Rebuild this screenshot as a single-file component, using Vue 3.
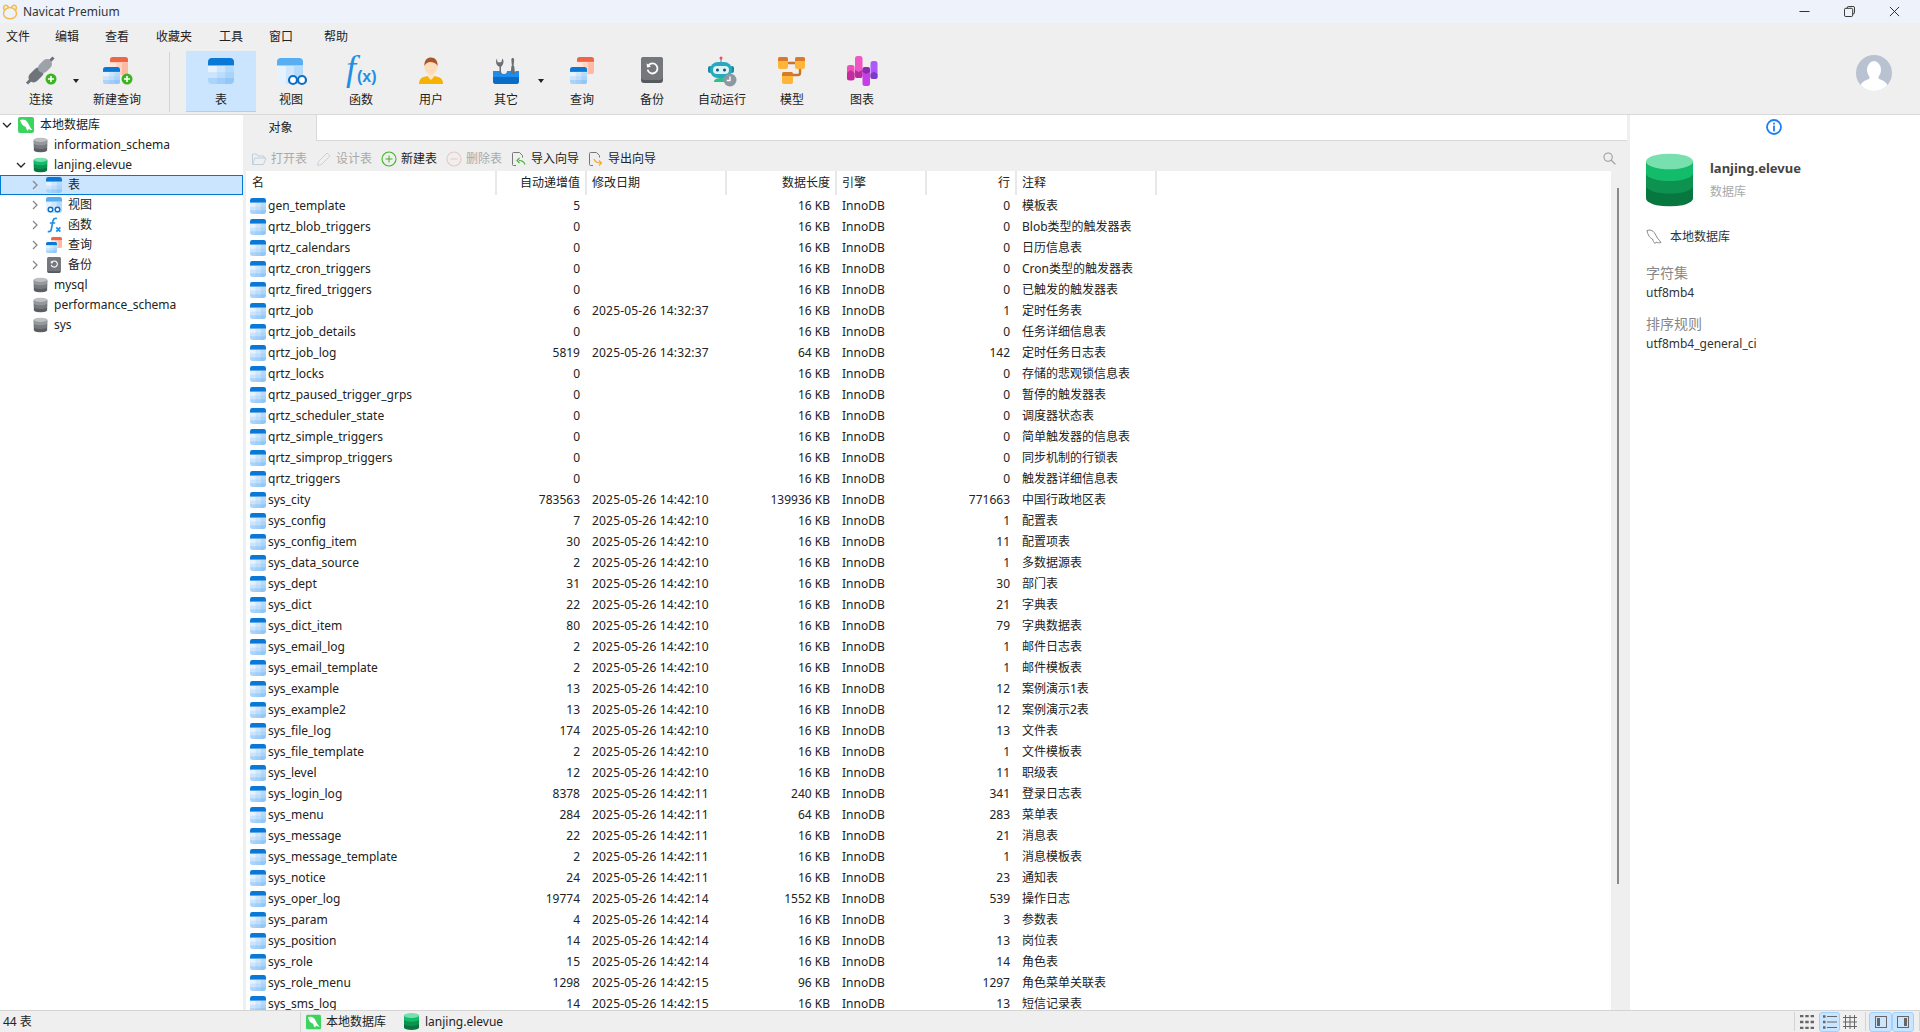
<template>
  <div class="app">
    <svg class="defs" aria-hidden="true">
      <defs>
        <clipPath id="clip-tbl"><rect width="16" height="16" rx="2.4" /></clipPath>
        <symbol id="tbl" viewBox="0 0 16 16">
          <g clip-path="url(#clip-tbl)">
            <rect width="16" height="16" fill="#e6f2fe" />
            <rect x="5.5" y="5" width="5" height="11" fill="#cfe6fc" />
            <rect x="10.5" y="5" width="5.5" height="11" fill="#b5dafb" />
            <rect y="8.7" width="16" height="3.6" fill="#8cc6f7" opacity=".28" />
            <rect y="12.3" width="16" height="4" fill="#6db6f5" opacity=".5" />
            <rect width="16" height="4.6" fill="#0a78d7" />
          </g>
        </symbol>
        <symbol id="tbl-red" viewBox="0 0 16 16">
          <g clip-path="url(#clip-tbl)">
            <rect width="16" height="16" fill="#ffe6dc" />
            <rect x="5.5" y="5" width="5" height="11" fill="#ffd3c2" />
            <rect x="10.5" y="5" width="5.5" height="11" fill="#ffb9a2" />
            <rect width="16" height="4.6" fill="#ef6545" />
          </g>
        </symbol>
        <symbol id="tbl-view" viewBox="0 0 16 16">
          <g clip-path="url(#clip-tbl)">
            <rect width="16" height="16" fill="#e6f2fe" />
            <rect x="5.5" y="5" width="5" height="11" fill="#cfe6fc" />
            <rect x="10.5" y="5" width="5.5" height="11" fill="#b5dafb" />
            <rect width="16" height="4.6" fill="#58aef3" />
          </g>
        </symbol>
        <symbol id="db-green" viewBox="0 0 48 54">
          <path d="M0 8V46a24 8 0 0 0 48 0V8z" fill="#08763f" />
          <path d="M0 8V33a24 8 0 0 0 48 0V8z" fill="#0e9250" />
          <path d="M0 8V20a24 8 0 0 0 48 0V8z" fill="#12bc6a" />
          <ellipse cx="24" cy="8" rx="24" ry="8" fill="#78e0ae" />
        </symbol>
        <symbol id="db-gray" viewBox="0 0 48 54">
          <path d="M0 8V46a24 8 0 0 0 48 0V8z" fill="#5b5f63" />
          <path d="M0 8V33a24 8 0 0 0 48 0V8z" fill="#777b80" />
          <path d="M0 8V20a24 8 0 0 0 48 0V8z" fill="#94989c" />
          <ellipse cx="24" cy="8" rx="24" ry="8" fill="#bdbfc2" />
        </symbol>
        <symbol id="mysql" viewBox="0 0 16 16">
          <rect width="16" height="16" rx="2" fill="#3dd35f" />
          <path d="M2 3c2.600-1.200 5.400-.6 7 1.600 1.300 1.800 2.300 4.300 3.600 6.200.5.800 1.100 1.500 1.800 2.200-1.500.1-2.800-.4-3.800-1.200l-.6 2.200C8.700 13 8 11.500 7.600 9.800 5.200 9.400 3 6.800 2 3z" fill="#fff" />
        </symbol>
        <symbol id="fx-small" viewBox="0 0 16 16">
          <path d="M11 1.500C8.500.7 7.300 2 6.900 4.200L5.300 12.500C5 14.300 3.800 15 1.800 14.400M3.800 6h5.400" fill="none" stroke="#1f8fe6" stroke-width="1.700" />
          <path d="M10.300 10.300l4 4.300m0-4.300l-4 4.300" fill="none" stroke="#1f8fe6" stroke-width="1.700" />
        </symbol>
        <symbol id="backup" viewBox="0 0 22 26">
          <rect width="22" height="26" rx="3" fill="#55585c" />
          <rect width="22" height="23" rx="3" fill="#74777b" />
          <path d="M7.500 8.400a5 5 0 1 1-.9 4.200" fill="none" stroke="#fff" stroke-width="1.800" />
          <path d="M5.600 6.200l.4 4.200 4-.7z" fill="#fff" />
        </symbol>
      </defs>
    </svg>

    <header class="titlebar">
      <svg class="logo" viewBox="0 0 16 16">
        <path d="M8 3.500c3.500 0 6.500 3 6.500 6.200 0 2.900-3 5-6.500 5s-6.500-2.100-6.500-5C1.500 6.500 4.500 3.500 8 3.500z" fill="none" stroke="#f2bd4e" stroke-width="1.500" />
        <path d="M3 6.500C1 5 1 2.500 3 1.500c1.500-.6 3 .4 3.500 2.200M13 6.500c2-1.500 2-4 0-5-1.500-.6-3 .4-3.500 2.200" fill="none" stroke="#f2bd4e" stroke-width="1.500" />
      </svg>
      <span class="app-name">Navicat Premium</span>
      <div class="win-btns">
        <svg viewBox="0 0 12 12"><path d="M.500 6h11" stroke="#222" fill="none" /></svg>
        <svg viewBox="0 0 12 12"><path d="M3.500 2.500V2a1.500 1.500 0 0 1 1.500-1.500h5A1.500 1.500 0 0 1 11.500 2v5A1.500 1.500 0 0 1 10 8.500h-.5M2 2.500h6A1.500 1.500 0 0 1 9.500 4v6A1.500 1.500 0 0 1 8 11.500H2A1.500 1.500 0 0 1 .500 10V4A1.500 1.500 0 0 1 2 2.500z" stroke="#222" fill="none" /></svg>
        <svg viewBox="0 0 12 12"><path d="M1 1l10 10M11 1L1 11" stroke="#222" fill="none" /></svg>
      </div>
    </header>

    <nav class="menubar">
      <span v-for="m in menus" :key="m">{{ m }}</span>
    </nav>

    <div class="toolbar">
      <button class="tool">
        <svg viewBox="0 0 32 32">
          <path d="M2 28.500L8 22.500M23 8l5.500-5.500" stroke="#6d7278" stroke-width="3" fill="none" />
          <path d="M8.500 22.500L13.500 17.500" stroke="#6f747a" stroke-width="10" stroke-linecap="round" fill="none" />
          <path d="M18 13L22 9" stroke="#9da2a8" stroke-width="10" stroke-linecap="round" fill="none" />
          <circle cx="26" cy="24" r="5.500" fill="#3cb521" />
          <path d="M23 24h6M26 21v6" stroke="#fff" stroke-width="1.600" />
        </svg>
        <span>连接</span>
      </button>
      <i class="caret"></i>
      <button class="tool">
        <svg viewBox="0 0 32 32">
          <use href="#tbl-red" x="9" y="2" width="18" height="18" />
          <use href="#tbl" x="2" y="12" width="17" height="17" />
          <circle cx="26" cy="24" r="5.500" fill="#3cb521" />
          <path d="M23 24h6M26 21v6" stroke="#fff" stroke-width="1.600" />
        </svg>
        <span>新建查询</span>
      </button>
      <i class="tool-sep"></i>
      <button class="tool active">
        <svg viewBox="0 0 32 32"><use href="#tbl" x="3" y="3" width="26" height="26" /></svg>
        <span>表</span>
      </button>
      <button class="tool">
        <svg viewBox="0 0 32 32">
          <use href="#tbl-view" x="2" y="3" width="26" height="26" />
          <circle cx="18" cy="25" r="4" fill="#fff" stroke="#0a6fc8" stroke-width="2.200" />
          <circle cx="27" cy="25" r="4" fill="#fff" stroke="#0a6fc8" stroke-width="2.200" />
        </svg>
        <span>视图</span>
      </button>
      <button class="tool">
        <svg viewBox="0 0 32 32">
          <text x="1" y="25" class="fx-f">f</text>
          <text x="12" y="27" class="fx-x">(x)</text>
        </svg>
        <span>函数</span>
      </button>
      <button class="tool">
        <svg viewBox="0 0 32 32">
          <path d="M4 29c0-6 4-8 12-8s12 2 12 8z" fill="#f6b200" />
          <path d="M13 18h6v4l-3 3-3-3z" fill="#fde3c8" />
          <ellipse cx="16" cy="11.500" rx="6.500" ry="8" fill="#fddcb9" />
          <path d="M9.500 11c-.6-6 3-8.500 6.500-8.500 4 0 7 3 6.500 8.500-1.500-3-4-4-7.500-4-2 0-4 1-5.500 4z" fill="#a8572a" />
        </svg>
        <span>用户</span>
      </button>
      <button class="tool tool-other">
        <svg viewBox="0 0 32 32">
          <path d="M3 16h8a3 3 0 0 0 6 0h5a3 3 0 0 0 4 0h3v10a3 3 0 0 1-3 3H6a3 3 0 0 1-3-3z" fill="#1c8cee" />
          <path d="M3 22h26v4a3 3 0 0 1-3 3H6a3 3 0 0 1-3-3z" fill="#0a6cc6" />
          <path d="M9.500 19V11.800C7.200 11 6 9 6 6.800c0-1.300.4-2.500 1-3.300l.5 3.800h3.800l1-3.800c.8.800 1.200 2 1.200 3.300 0 2.200-1.300 4.200-2.500 5V19a1 1 0 0 1-1.500 0z" fill="#6b7075" />
          <path d="M22 3h1.500l.7 1.500L23.600 11h-1.700l-.6-6.500zM21.400 11h2.800l.8 8h-4.400z" fill="#6b7075" />
        </svg>
        <span>其它</span>
      </button>
      <i class="caret"></i>
      <button class="tool">
        <svg viewBox="0 0 32 32">
          <use href="#tbl-red" x="11" y="2" width="17" height="17" />
          <use href="#tbl" x="4" y="12" width="17" height="17" />
        </svg>
        <span>查询</span>
      </button>
      <button class="tool">
        <svg viewBox="0 0 32 32"><use href="#backup" x="5" y="2" width="22" height="26" /></svg>
        <span>备份</span>
      </button>
      <button class="tool">
        <svg viewBox="0 0 32 32">
          <path d="M15 4V8" stroke="#7e8a94" stroke-width="1.200" />
          <circle cx="15" cy="3" r="1.500" fill="#ef4d5c" />
          <path d="M8 27c0-3 3-4 7-4s7 1 7 4z" fill="#2cc08e" />
          <rect x="2" y="11" width="4" height="7" rx="2" fill="#1a8aa0" />
          <rect x="24" y="11" width="4" height="7" rx="2" fill="#1a8aa0" />
          <rect x="4" y="7" width="22" height="16" rx="8" fill="#27a9bf" />
          <rect x="7" y="11" width="16" height="8" rx="4" fill="#dff4f8" />
          <circle cx="11.500" cy="15" r="1.500" fill="#164f78" />
          <circle cx="18.500" cy="15" r="1.500" fill="#164f78" />
          <circle cx="24" cy="25" r="6.500" fill="#8e98a2" />
          <path d="M24 21.500V25.500h-3.200" stroke="#fff" stroke-width="1.300" fill="none" />
        </svg>
        <span>自动运行</span>
      </button>
      <button class="tool">
        <svg viewBox="0 0 32 32">
          <path d="M12 8h7M24 14v4a2 2 0 0 1-2 2h-5" stroke="#c9742a" stroke-width="2.400" fill="none" />
          <rect x="2" y="2" width="10" height="12" rx="2" fill="#ffb43a" />
          <path d="M2 6V4a2 2 0 0 1 2-2h6a2 2 0 0 1 2 2v2z" fill="#d97a28" />
          <rect x="19" y="2" width="10" height="12" rx="2" fill="#ffb43a" />
          <path d="M19 6V4a2 2 0 0 1 2-2h6a2 2 0 0 1 2 2v2z" fill="#d97a28" />
          <rect x="6" y="17" width="11" height="12" rx="2" fill="#ffb43a" />
          <path d="M6 21v-2a2 2 0 0 1 2-2h7a2 2 0 0 1 2 2v2z" fill="#d97a28" />
        </svg>
        <span>模型</span>
      </button>
      <button class="tool">
        <svg viewBox="0 0 32 32">
          <rect x="1" y="10" width="7.500" height="15" rx="2.500" fill="#f04ebb" />
          <path d="M1 18l3.700-3 3.800 3v5a2.500 2.500 0 0 1-2.500 2.500H3.500A2.500 2.500 0 0 1 1 23z" fill="#c42b9c" />
          <rect x="9" y="1" width="7.500" height="22" rx="2.500" fill="#f055c6" />
          <path d="M9 15l3.700 2 3.800-2v5.500a2.500 2.500 0 0 1-2.500 2.500h-2.500A2.500 2.500 0 0 1 9 20.500z" fill="#b72ba0" />
          <rect x="16.500" y="12" width="7.500" height="19" rx="2.500" fill="#c63ee6" />
          <path d="M16.500 17l3.700 2 3.800-2v-2.500a2.500 2.500 0 0 0-2.500-2.500H19a2.500 2.500 0 0 0-2.500 2.500z" fill="#8f2ab0" />
          <rect x="24.500" y="6" width="7" height="18" rx="2.500" fill="#ac58fb" />
          <path d="M24.500 19l3.500-2.500 3.500 2.500v2.500a2.500 2.500 0 0 1-2.500 2.500h-2a2.500 2.500 0 0 1-2.500-2.500z" fill="#7c3bc6" />
        </svg>
        <span>图表</span>
      </button>
      <svg class="avatar" viewBox="0 0 36 36">
        <clipPath id="clip-av"><circle cx="18" cy="18" r="18" /></clipPath>
        <g clip-path="url(#clip-av)">
          <rect width="36" height="36" fill="#b9c2d0" />
          <ellipse cx="18" cy="15" rx="7" ry="9" fill="#fff" />
          <path d="M14 21h8l1 3c4 1.500 8 3 9 8v4H4v-4c1-5 5-6.500 9-8z" fill="#fff" />
        </g>
      </svg>
    </div>

    <div class="main">
      <aside class="tree">
        <div v-for="n in tree" :key="n.label" class="node" :class="['lv' + n.level, { selected: n.selected }]">
          <span class="chev">
            <svg v-if="n.open !== undefined" viewBox="0 0 10 10">
              <path v-if="n.open" d="M1 3l4 4 4-4" fill="none" stroke="#222" stroke-width="1.300" />
              <path v-else d="M3 1l4 4-4 4" fill="none" stroke="#888" stroke-width="1.300" />
            </svg>
          </span>
          <svg class="node-icon" :class="n.icon" viewBox="0 0 16 16">
            <template v-if="n.icon === 'query'">
              <use href="#tbl-red" x="5" y="0" width="11" height="11" />
              <use href="#tbl" x="0" y="5" width="11" height="11" />
            </template>
            <template v-else-if="n.icon === 'view'">
              <use href="#tbl-view" x="0" y="0" width="16" height="16" />
              <circle cx="4.500" cy="12.500" r="2.300" fill="#fff" stroke="#0a6fc8" stroke-width="1.400" />
              <circle cx="11.500" cy="12.500" r="2.300" fill="#fff" stroke="#0a6fc8" stroke-width="1.400" />
            </template>
            <use v-else :href="'#' + n.icon" x="0" y="0" width="16" height="16" />
          </svg>
          <span>{{ n.label }}</span>
        </div>
      </aside>

      <section class="center">
        <div class="tabs">
          <div class="tab">对象</div>
          <div class="tab-rest"></div>
        </div>
        <div class="obj-bar">
          <span v-for="a in actions" :key="a.label" class="act" :class="{ off: a.off }">
            <svg viewBox="0 0 16 16" v-html="a.svg"></svg>
            {{ a.label }}
          </span>
          <svg class="search" viewBox="0 0 14 14">
            <circle cx="5.500" cy="5.500" r="4.500" fill="none" stroke="#999" stroke-width="1.100" />
            <path d="M8.800 8.800l4.500 4.500" stroke="#999" stroke-width="1.300" />
          </svg>
        </div>
        <div class="list-wrap">
          <div class="list">
            <div class="row head">
              <span v-for="c in columns" :key="c.label" :class="{ num: c.num }">{{ c.label }}</span>
            </div>
            <div v-for="r in rows" :key="r[0]" class="row">
              <span class="name"><svg viewBox="0 0 16 16"><use href="#tbl" width="16" height="16" /></svg>{{ r[0] }}</span>
              <span class="num">{{ r[1] }}</span>
              <span class="date">{{ r[2] }}</span>
              <span class="num">{{ r[3] }} KB</span>
              <span>InnoDB</span>
              <span class="num">{{ r[4] }}</span>
              <span>{{ r[5] }}</span>
            </div>
          </div>
          <div class="gutter"><i class="thumb"></i></div>
        </div>
      </section>

      <aside class="panel">
        <svg class="info" viewBox="0 0 16 16">
          <circle cx="8" cy="8" r="7" fill="none" stroke="#1e80f0" stroke-width="1.800" />
          <rect x="7.100" y="3.600" width="1.800" height="1.900" fill="#1e80f0" />
          <rect x="7.100" y="6.600" width="1.800" height="5.800" fill="#1e80f0" />
        </svg>
        <div class="db-head">
          <svg viewBox="0 0 48 54"><use href="#db-green" width="48" height="54" /></svg>
          <div class="db-text">
            <div class="db-name">lanjing.elevue</div>
            <div class="db-type">数据库</div>
          </div>
        </div>
        <div class="conn">
          <svg viewBox="0 0 16 16">
            <path d="M1 1.500c3-1 5.600-.2 7.200 2 1.200 1.700 2.300 4.200 3.600 6 .8 1 1.800 2.200 3.200 4-1.800.6-3.400.3-4.800-.5l-1 1.500C7.800 13.400 7 12 6.600 10 4 9.300 1.800 6 1 1.500z" fill="none" stroke="#888" />
          </svg>
          本地数据库
        </div>
        <div class="prop-label">字符集</div>
        <div class="prop-val">utf8mb4</div>
        <div class="prop-label second">排序规则</div>
        <div class="prop-val">utf8mb4_general_ci</div>
      </aside>
    </div>

    <footer class="status">
      <span class="count">44 表</span>
      <span class="crumb first"><svg viewBox="0 0 16 16"><use href="#mysql" width="16" height="16" /></svg>本地数据库</span>
      <span class="crumb second"><svg viewBox="0 0 48 54"><use href="#db-green" width="48" height="54" /></svg>lanjing.elevue</span>
      <div class="modes">
        <i class="mode-sep"></i>
        <span class="mode m-grid">
          <svg viewBox="0 0 14 14"><path d="M0 1h3.400M5.300 1h3.400M10.600 1H14M0 7h3.400M5.300 7h3.400M10.600 7H14M0 13h3.400M5.300 13h3.400M10.600 13H14" stroke="#666" stroke-width="2.400" fill="none" /></svg>
        </span>
        <span class="mode m-list on">
          <svg viewBox="0 0 14 14"><path d="M0 1.500h2.500M0 7h2.500M0 12.500h2.500" stroke="#666" stroke-width="2.400" /><path d="M4 1.500h10M4 7h10M4 12.500h10" stroke="#666" stroke-width="1.200" /></svg>
        </span>
        <span class="mode m-table">
          <svg viewBox="0 0 14 14"><path d="M0 2.500h14M0 7h14M0 11.500h14M2.500 0v14M7 0v14M11.500 0v14" stroke="#666" fill="none" /></svg>
        </span>
        <i class="mode-sep"></i>
        <span class="mode m-left on">
          <svg viewBox="0 0 12 12"><rect x=".5" y=".5" width="11" height="11" fill="none" stroke="#666" /><rect x="2" y="2" width="3" height="8" fill="#666" /></svg>
        </span>
        <span class="mode m-right on">
          <svg viewBox="0 0 12 12"><rect x=".5" y=".5" width="11" height="11" fill="none" stroke="#666" /><rect x="7" y="2" width="3" height="8" fill="#666" /></svg>
        </span>
        <i class="mode-sep"></i>
      </div>
    </footer>
  </div>
</template>

<script setup>
const menus = ['文件', '编辑', '查看', '收藏夹', '工具', '窗口', '帮助']

const tree = [
  { label: '本地数据库', level: 0, open: true, icon: 'mysql' },
  { label: 'information_schema', level: 1, icon: 'db-gray' },
  { label: 'lanjing.elevue', level: 1, open: true, icon: 'db-green' },
  { label: '表', level: 2, open: false, icon: 'tbl', selected: true },
  { label: '视图', level: 2, open: false, icon: 'view' },
  { label: '函数', level: 2, open: false, icon: 'fx-small' },
  { label: '查询', level: 2, open: false, icon: 'query' },
  { label: '备份', level: 2, open: false, icon: 'backup' },
  { label: 'mysql', level: 1, icon: 'db-gray' },
  { label: 'performance_schema', level: 1, icon: 'db-gray' },
  { label: 'sys', level: 1, icon: 'db-gray' },
]

const actions = [
  { label: '打开表', off: true, svg: '<path d="M1.500 13.500V3h4l1.500 2h6v2M1.500 13.500L4 7h11l-2.500 6.500z" fill="none" stroke="#bfd0dc"/>' },
  { label: '设计表', off: true, svg: '<path d="M1.500 14.500l1-4L11 2l3 3-8.500 8.500z" fill="none" stroke="#c5d3de"/>' },
  { label: '新建表', svg: '<circle cx="8" cy="8" r="7" fill="none" stroke="#3cb521" stroke-width="1.100"/><path d="M4.500 8h7M8 4.500v7" stroke="#3cb521"/>' },
  { label: '删除表', off: true, svg: '<circle cx="8" cy="8" r="7" fill="none" stroke="#e8c8c0" stroke-width="1.100"/><path d="M4.500 8h7" stroke="#e8c8c0"/>' },
  { label: '导入向导', svg: '<path d="M5 14.500H2.500a1 1 0 0 1-1-1v-11a1 1 0 0 1 1-1h6l3 3v2" fill="none" stroke="#777"/><path d="M14 13.500c-1-3-3-4-6-4M8.500 7L6 9.500l2.500 2.500" fill="none" stroke="#3cb521" stroke-width="1.100"/>' },
  { label: '导出向导', svg: '<path d="M5 14.500H2.500a1 1 0 0 1-1-1v-11a1 1 0 0 1 1-1h6l3 3v2" fill="none" stroke="#777"/><path d="M6 8c1 3 3 4 7 4M11 9.500l2.500 2.500L11 14.500" fill="none" stroke="#f5a623" stroke-width="1.100"/>' },
]

const columns = [
  { label: '名' },
  { label: '自动递增值', num: true },
  { label: '修改日期' },
  { label: '数据长度', num: true },
  { label: '引擎' },
  { label: '行', num: true },
  { label: '注释' },
]

const d = '2025-05-26 14:42:'
const rows = [
  ['gen_template', 5, '', 16, 0, '模板表'],
  ['qrtz_blob_triggers', 0, '', 16, 0, 'Blob类型的触发器表'],
  ['qrtz_calendars', 0, '', 16, 0, '日历信息表'],
  ['qrtz_cron_triggers', 0, '', 16, 0, 'Cron类型的触发器表'],
  ['qrtz_fired_triggers', 0, '', 16, 0, '已触发的触发器表'],
  ['qrtz_job', 6, '2025-05-26 14:32:37', 16, 1, '定时任务表'],
  ['qrtz_job_details', 0, '', 16, 0, '任务详细信息表'],
  ['qrtz_job_log', 5819, '2025-05-26 14:32:37', 64, 142, '定时任务日志表'],
  ['qrtz_locks', 0, '', 16, 0, '存储的悲观锁信息表'],
  ['qrtz_paused_trigger_grps', 0, '', 16, 0, '暂停的触发器表'],
  ['qrtz_scheduler_state', 0, '', 16, 0, '调度器状态表'],
  ['qrtz_simple_triggers', 0, '', 16, 0, '简单触发器的信息表'],
  ['qrtz_simprop_triggers', 0, '', 16, 0, '同步机制的行锁表'],
  ['qrtz_triggers', 0, '', 16, 0, '触发器详细信息表'],
  ['sys_city', 783563, d + '10', 139936, 771663, '中国行政地区表'],
  ['sys_config', 7, d + '10', 16, 1, '配置表'],
  ['sys_config_item', 30, d + '10', 16, 11, '配置项表'],
  ['sys_data_source', 2, d + '10', 16, 1, '多数据源表'],
  ['sys_dept', 31, d + '10', 16, 30, '部门表'],
  ['sys_dict', 22, d + '10', 16, 21, '字典表'],
  ['sys_dict_item', 80, d + '10', 16, 79, '字典数据表'],
  ['sys_email_log', 2, d + '10', 16, 1, '邮件日志表'],
  ['sys_email_template', 2, d + '10', 16, 1, '邮件模板表'],
  ['sys_example', 13, d + '10', 16, 12, '案例演示1表'],
  ['sys_example2', 13, d + '10', 16, 12, '案例演示2表'],
  ['sys_file_log', 174, d + '10', 16, 13, '文件表'],
  ['sys_file_template', 2, d + '10', 16, 1, '文件模板表'],
  ['sys_level', 12, d + '10', 16, 11, '职级表'],
  ['sys_login_log', 8378, d + '11', 240, 341, '登录日志表'],
  ['sys_menu', 284, d + '11', 64, 283, '菜单表'],
  ['sys_message', 22, d + '11', 16, 21, '消息表'],
  ['sys_message_template', 2, d + '11', 16, 1, '消息模板表'],
  ['sys_notice', 24, d + '11', 16, 23, '通知表'],
  ['sys_oper_log', 19774, d + '14', 1552, 539, '操作日志'],
  ['sys_param', 4, d + '14', 16, 3, '参数表'],
  ['sys_position', 14, d + '14', 16, 13, '岗位表'],
  ['sys_role', 15, d + '14', 16, 14, '角色表'],
  ['sys_role_menu', 1298, d + '15', 96, 1297, '角色菜单关联表'],
  ['sys_sms_log', 14, d + '15', 16, 13, '短信记录表'],
]
</script>

<style>
html, body { margin: 0; overflow: hidden; }
</style>

<style scoped>
.app { width: 1920px; height: 1032px; display: flex; flex-direction: column; overflow: hidden; background: #fff; color: #222; font: 12px/16px "Noto Sans", "Noto Sans CJK SC", sans-serif; }
.defs { position: absolute; width: 0; height: 0; }
.titlebar { flex: none; height: 23px; display: flex; align-items: center; padding-left: 2px; background: #eef3fb; }
.logo { width: 16px; height: 16px; }
.app-name { margin-left: 5px; color: #333; }
.win-btns { margin-left: auto; display: flex; gap: 34px; padding-right: 20px; }
.win-btns svg { width: 11px; height: 11px; }
.menubar { flex: none; height: 27px; display: flex; align-items: center; padding-left: 6px; background: #efefef; }
.menubar span { margin-right: 26px; }
.menubar span:nth-child(1) { margin-right: 25px; }
.menubar span:nth-child(3), .menubar span:nth-child(4) { margin-right: 27px; }
.menubar span:nth-child(6) { margin-right: 31px; }
.toolbar { flex: none; height: 65px; display: flex; padding: 1px 0 0 6px; border-bottom: 1px solid #d9d9d9; background: #efefef; box-sizing: border-box; }
.tool { width: 70px; height: 61px; padding: 4px 0 0; display: flex; flex-direction: column; align-items: center; gap: 5px; border: 0; border-bottom: 1px solid transparent; background: none; color: #222; font: inherit; box-sizing: border-box; }
.tool svg { width: 32px; height: 32px; flex: none; overflow: visible; }
.tool.active { background: #cce5ff; border-bottom-color: #a8d3f8; }
.tool-other { margin-left: 5px; }
.caret { width: 0; height: 0; margin: 28px -3px 0; border: 3px solid transparent; border-top: 4px solid #222; border-bottom: 0; box-sizing: content-box; }
.caret + .tool { margin-left: 6px; }
.tool-sep { width: 1px; height: 60px; margin: 1px 16px 0 17px; background: #d4d4d4; }
.fx-f { font: italic 36px "Liberation Serif", serif; fill: #1f8fe6; }
.fx-x { font: bold 16px "Liberation Sans", sans-serif; fill: #1f8fe6; }
.avatar { width: 36px; height: 36px; margin: 2px 28px 0 auto; position: relative; top: 2px; }

.main { flex: 1; min-height: 0; display: flex; }
.tree { flex: none; width: 243px; background: #fff; }
.node { height: 20px; display: flex; align-items: center; box-sizing: border-box; }
.chev { width: 10px; height: 10px; flex: none; margin-right: 2px; }
.chev svg { display: block; width: 10px; height: 10px; }
.node-icon { width: 16px; height: 16px; flex: none; margin-right: 6px; }
.lv0 { padding-left: 2px; }
.lv0 .chev { margin-right: 6px; }
.lv1 { padding-left: 16px; }
.lv1 .chev { margin-right: 7px; }
.lv1 .node-icon { width: 15px; margin-right: 6px; }
.lv2 { padding-left: 30px; }
.lv2 .chev { margin-right: 6px; }
.selected { background: #cce5ff; border: 1px solid #0078d7; padding-left: 29px; }

.center { flex: none; width: 1387px; display: flex; flex-direction: column; min-width: 0; background: #efefef; }
.tabs { flex: none; height: 26px; display: flex; padding-right: 3px; box-sizing: border-box; }
.tab { width: 73px; padding-left: 2px; box-sizing: border-box; text-align: center; line-height: 25px; }
.tab-rest { flex: 1; background: #fff; border-left: 1px solid #d9d9d9; border-bottom: 1px solid #d9d9d9; }
.obj-bar { flex: none; height: 30px; display: flex; align-items: center; padding: 5px 0 0 8px; gap: 9px; box-sizing: border-box; }
.act { display: flex; align-items: center; gap: 4px; color: #222; }
.act.off { color: #a9a9a9; }
.act svg { width: 16px; height: 16px; }
.search { width: 13px; height: 13px; margin-left: auto; margin-right: 14px; }
.list-wrap { flex: 1; min-height: 0; display: flex; }
.list { flex: 1; min-width: 0; margin-left: 3px; background: #fff; overflow: hidden; }
.row { height: 21px; display: grid; grid-template-columns: 249px 90px 140px 110px 90px 90px 140px; align-items: center; white-space: nowrap; }
.row > span { padding: 0 5px 0 7px; }
.row > .num { text-align: right; padding: 0 5px 0 0; }
.row > .name { display: flex; align-items: center; gap: 2px; padding: 0 0 0 4px; }
.row > .date { letter-spacing: .18px; }
.name svg { width: 16px; height: 16px; flex: none; }
.head { height: 24px; }
.head span { height: 24px; line-height: 23px; box-shadow: 2px 0 0 #e8e8e8; box-sizing: border-box; }
.head span:first-child { padding-left: 6px; }
.gutter { flex: none; width: 19px; }
.thumb { display: block; width: 2px; height: 696px; margin: 17px 0 0 6px; background: #8a8a8a; }

.panel { flex: 1; min-width: 0; padding: 0 16px; box-sizing: border-box; background: #fff; }
.info { display: block; width: 16px; height: 16px; margin: 4px 0 0 120px; }
.db-head { display: flex; gap: 17px; margin-top: 18px; }
.db-head svg { width: 47px; height: 54px; flex: none; }
.db-text { padding-top: 6px; }
.db-name { font-size: 13px; font-weight: 700; color: #444; line-height: 18px; }
.db-type { margin-top: 7px; color: #a9a9a9; }
.conn { display: flex; align-items: center; gap: 8px; margin-top: 22px; color: #333; }
.conn svg { width: 16px; height: 16px; }
.prop-label { margin: 18px 0 1px; font-size: 14px; line-height: 20px; color: #888; }
.prop-label.second { margin-top: 12px; }
.prop-val { line-height: 18px; color: #333; }

.status { flex: none; height: 22px; display: flex; align-items: center; border-top: 1px solid #d4d4d4; background: #efefef; box-sizing: border-box; }
.count { width: 300px; padding-left: 3px; box-sizing: border-box; flex: none; }
.crumb { display: flex; align-items: center; height: 20px; flex: none; }
.crumb.first { width: 104px; gap: 5px; padding-left: 5px; border-left: 1px solid #d4d4d4; box-sizing: border-box; }
.crumb.first svg { width: 15px; height: 16px; }
.crumb.second { gap: 6px; }
.crumb.second svg { width: 15px; height: 17px; }
.modes { margin-left: auto; display: flex; align-items: center; height: 20px; }
.mode-sep { width: 1px; height: 19px; background: #d4d4d4; flex: none; }
.mode { height: 20px; display: flex; align-items: center; justify-content: center; box-sizing: border-box; flex: none; }
.mode svg { width: 14px; height: 14px; }
.mode.on { background: #cce5ff; border: 1px solid #a0d0ff; border-radius: 3px; }
.m-grid { width: 24px; }
.m-list { width: 21px; }
.m-table { width: 20px; margin-right: 5px; }
.m-left { width: 23px; margin-left: 3px; }
.m-right { width: 22px; margin-right: 5px; }
.m-left svg, .m-right svg { width: 12px; height: 12px; }
</style>
